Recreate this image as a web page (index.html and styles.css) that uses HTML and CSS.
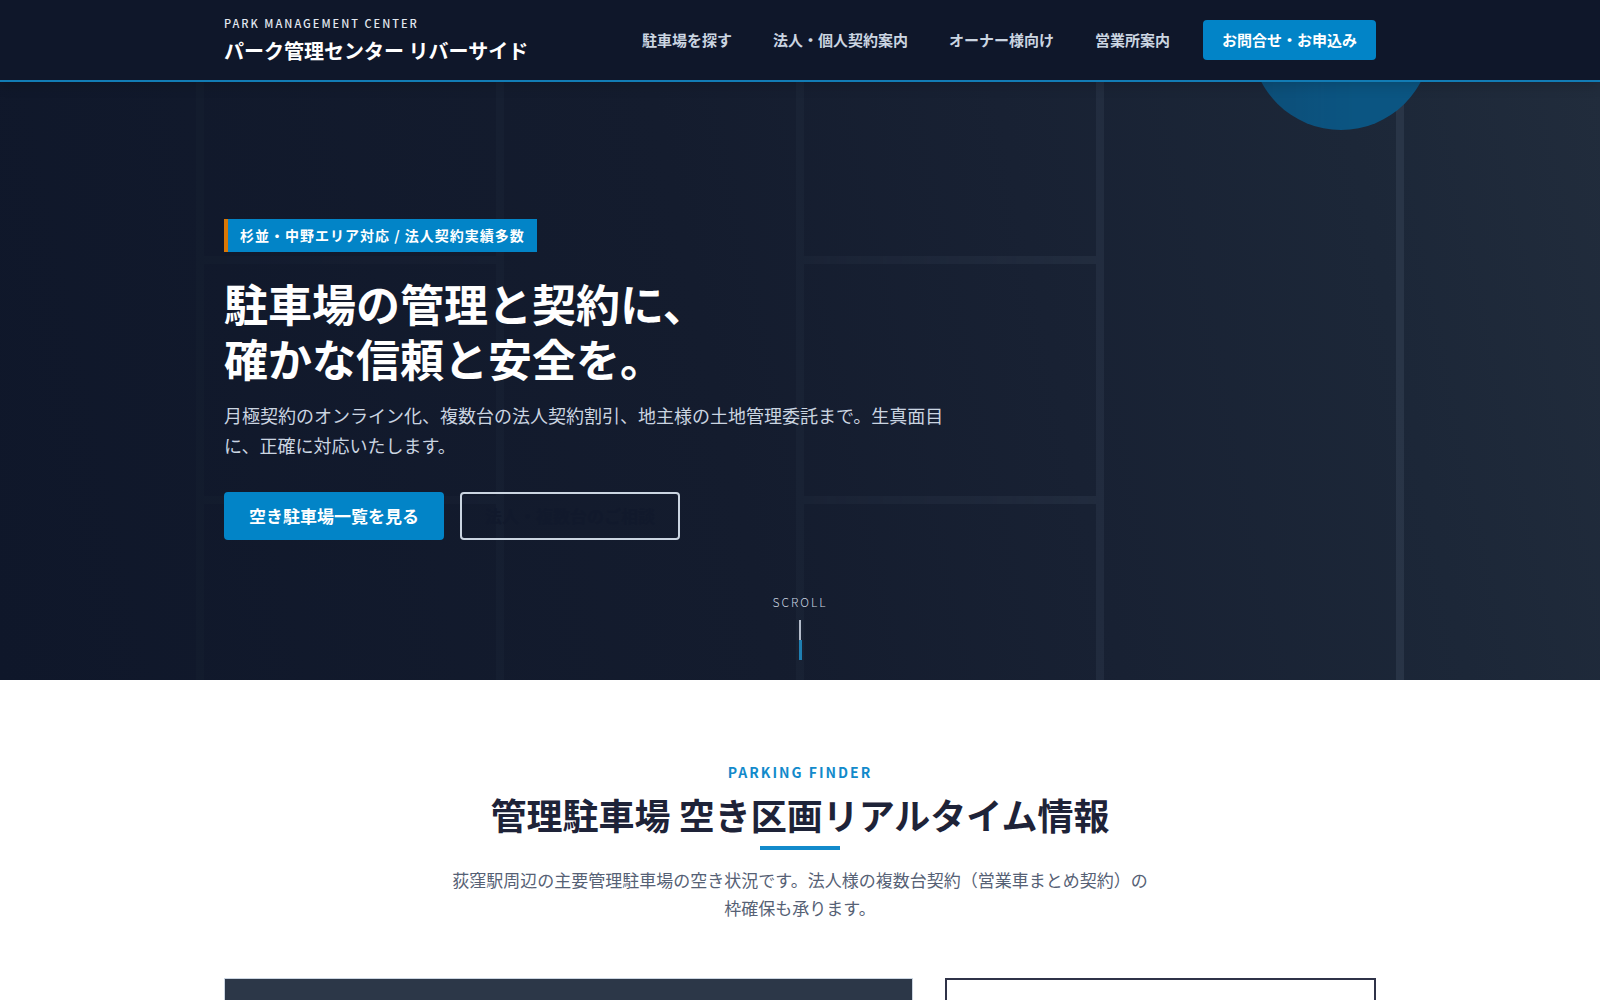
FILE: index.html
```html
<!DOCTYPE html>
<html lang="ja">
<head>
  <meta charset="UTF-8">
  <meta name="viewport" content="width=device-width, initial-scale=1.0">
  <title>パーク管理センター リバーサイド</title>
  <link rel="stylesheet" href="styles.css">
</head>
<body>

  <header class="site-header">
    <div class="container header-inner">
      <a href="#" class="logo">
        <span class="logo-sub">PARK MANAGEMENT CENTER</span>
        <span class="logo-main">パーク管理センター リバーサイド</span>
      </a>
      <nav class="global-nav">
        <a href="#finder">駐車場を探す</a>
        <a href="#contract">法人・個人契約案内</a>
        <a href="#owner">オーナー様向け</a>
        <a href="#office">営業所案内</a>
        <a href="#contact" class="nav-cta">お問合せ・お申込み</a>
      </nav>
    </div>
  </header>

  <section class="hero">
    <!-- parking lot lines -->
    <svg class="hero-bg" viewBox="0 0 1600 598" preserveAspectRatio="xMidYMid slice" aria-hidden="true">
      <g stroke="#475569" stroke-opacity="0.5" stroke-width="8" fill="none">
        <path d="M200 0V598M500 0V598M800 0V598M1100 0V598M1400 0V598"/>
        <path d="M204 178H496M204 418H496M804 178H1096M804 418H1096"/>
      </g>
      <circle cx="1341" cy="-42" r="90" fill="#0074b4"/>
    </svg>
    <div class="container hero-content">
      <p class="hero-badge">杉並・中野エリア対応 / 法人契約実績多数</p>
      <h1>駐車場の管理と契約に、<br>確かな信頼と安全を。</h1>
      <p class="hero-text">月極契約のオンライン化、複数台の法人契約割引、地主様の土地管理委託まで。生真面目に、正確に対応いたします。</p>
      <div class="hero-buttons">
        <a href="#finder" class="btn btn-primary">空き駐車場一覧を見る</a>
        <a href="#contract" class="btn btn-outline">法人・複数台のご相談</a>
      </div>
    </div>
    <div class="scroll-hint">
      <span>SCROLL</span>
      <div class="scroll-line"></div>
    </div>
  </section>

  <section class="finder" id="finder">
    <div class="container">
      <div class="section-head">
        <p class="section-label">PARKING FINDER</p>
        <h2>管理駐車場 空き区画リアルタイム情報</h2>
        <p class="section-desc">荻窪駅周辺の主要管理駐車場の空き状況です。法人様の複数台契約（営業車まとめ契約）の枠確保も承ります。</p>
      </div>
      <div class="finder-grid">
        <div class="map-panel"></div>
        <div class="list-panel"></div>
      </div>
    </div>
  </section>

</body>
</html>
```
FILE: styles.css
```css
* {
  margin: 0;
  padding: 0;
  box-sizing: border-box;
}

body {
  font-family: "Noto Sans CJK JP", "Noto Sans", sans-serif;
  font-size: 16px;
  line-height: 28px;
  color: #1e2338;
  background: #fff;
}

a {
  color: inherit;
  text-decoration: none;
}

.container {
  width: 100%;
  max-width: 1200px;
  margin: 0 auto;
  padding: 0 24px;
}

/* header */
.site-header {
  position: relative;
  z-index: 10;
  background: #0f172a;
  border-bottom: 2px solid #127cb5;
  box-shadow: 0 4px 12px rgba(0, 0, 0, 0.15);
}

.header-inner {
  display: flex;
  justify-content: space-between;
  align-items: center;
  height: 80px;
}

.logo {
  display: flex;
  flex-direction: column;
  padding-top: 2px;
  color: #fff;
}

.logo-sub {
  font-size: 11px;
  line-height: 20px;
  font-weight: 500;
  letter-spacing: 2px;
  color: #e2e8f0;
}

.logo-main {
  font-size: 20px;
  line-height: 36px;
  font-weight: 700;
}

.global-nav {
  display: flex;
  align-items: center;
  gap: 41px;
  font-size: 15px;
  font-weight: 600;
  color: #cbd5e1;
}

.global-nav .nav-cta {
  margin-left: -8px;
  padding: 6px 19px;
  background: #0284c7;
  color: #fff;
  font-weight: 700;
  border-radius: 4px;
}

/* hero */
.hero {
  position: relative;
  display: flex;
  align-items: center;
  min-height: 598px;
  padding-bottom: 4px;
  background: linear-gradient(78deg, #0f172a 0%, #141c2e 45%, #182133 65%, #1c2738 85%, #212c3c 100%);
  overflow: hidden;
}

.hero-bg {
  position: absolute;
  inset: 0;
  width: 100%;
  height: 100%;
  opacity: 0.6;
  mask-image: linear-gradient(90deg, rgba(0, 0, 0, 0.1) 0%, rgba(0, 0, 0, 0.3) 50%, rgba(0, 0, 0, 1) 85%);
}

.hero-content {
  position: relative;
}

.hero-badge {
  display: inline-block;
  padding: 4px 12px;
  margin-bottom: 24px;
  background: #0284c7;
  border-left: 4px solid #d97706;
  color: #fff;
  font-size: 14px;
  line-height: 25px;
  font-weight: 700;
  letter-spacing: 1px;
}

.hero h1 {
  margin-bottom: 14px;
  font-size: 44px;
  line-height: 55px;
  font-weight: 700;
  color: #fff;
}

.hero-text {
  max-width: 750px;
  margin-bottom: 32px;
  font-size: 18px;
  line-height: 30px;
  color: #cbd5e1;
}

.hero-buttons {
  display: flex;
  gap: 16px;
}

.btn {
  padding: 8px 23px;
  border: 2px solid #0284c7;
  border-radius: 4px;
  font-size: 17px;
  font-weight: 700;
}

.btn-primary {
  background: #0284c7;
  color: #fff;
}

.btn-outline {
  border-color: #cbd5e1;
  color: #11192c;
}

.scroll-hint {
  position: absolute;
  bottom: 20px;
  left: 0;
  right: 0;
  display: flex;
  flex-direction: column;
  align-items: center;
  gap: 8px;
  font-size: 12px;
  line-height: 20px;
  font-weight: 300;
  letter-spacing: 2px;
  color: #cbd5e1;
}

.scroll-line {
  display: flex;
  flex-direction: column;
  justify-content: flex-end;
  width: 2px;
  height: 40px;
  background: #b4bccb;
}

.scroll-line::after {
  content: "";
  width: 3px;
  height: 20px;
  background: #1f7fb2;
}

/* parking finder */
.finder {
  padding: 80px 0;
}

.section-head {
  max-width: 700px;
  margin: 0 auto 56px;
  text-align: center;
}

.section-label {
  font-size: 14px;
  line-height: 24px;
  font-weight: 700;
  letter-spacing: 2px;
  color: #128acb;
}

.section-head h2 {
  margin-bottom: 16px;
  font-size: 36px;
  line-height: 60px;
  font-weight: 700;
  white-space: nowrap;
}

.section-head h2::after {
  content: "";
  display: block;
  width: 80px;
  height: 4px;
  margin: 2px auto 0;
  background: #128acb;
}

.section-desc {
  font-size: 17px;
  color: #566175;
}

.finder-grid {
  display: grid;
  grid-template-columns: 8fr 5fr;
  gap: 32px;
}

.map-panel {
  min-height: 500px;
  background: #2c3748;
  border: 1px solid #cbd5e1;
}

.list-panel {
  border: 2px solid #2f3348;
}
```
